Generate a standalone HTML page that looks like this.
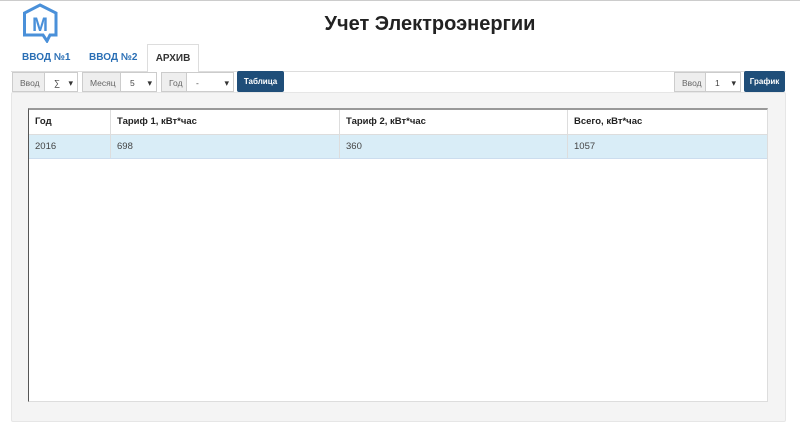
<!DOCTYPE html>
<html><head><meta charset="utf-8"><style>
body{margin:0;width:800px;height:426px;background:#fff;font-family:"Liberation Sans",Arial,sans-serif;position:relative;overflow:hidden;border-top:1px solid #ccc;box-sizing:border-box}
.a{position:absolute}
.title{left:0;width:860px;text-align:center;top:12px;font-size:20px;font-weight:bold;color:#222}
.tab{top:43px;height:27px;line-height:27px;font-size:10px;font-weight:bold;color:#2a6fb5}
.addon{background:#eee;border:1px solid #ccc;color:#666;font-size:8.5px;height:20px;line-height:20px;box-sizing:border-box;padding-left:7px}
.sel{background:#fff;border:1px solid #ccc;border-left:none;color:#444;font-size:8.5px;height:20px;line-height:20px;box-sizing:border-box;padding-left:9px}
.sel:after{content:"▾";position:absolute;right:4px;font-size:9px;color:#333}
.btn{background:#1f4e79;color:#fff;font-size:8px;font-weight:bold;height:21px;line-height:21px;text-align:center;border-radius:2px;top:70px}
.th,.td{font-size:9.5px;color:#222;padding-left:6px;box-sizing:border-box}
.th{font-weight:bold;top:108px;height:26px;line-height:26px}
.td{top:134px;height:24px;line-height:24px;color:#444}
</style></head><body>
<svg class="a" style="left:22px;top:2px" width="36" height="40" viewBox="0 0 36 40"><path d="M18 2 L34 10 L34 32 L28 32 L25 38 L21 32 L2.5 32 L2.5 10 Z" fill="none" stroke="#4a90d9" stroke-width="3" stroke-linejoin="miter"/><text x="18" y="28" text-anchor="middle" font-family="Liberation Sans" font-weight="bold" font-size="19" fill="#4a90d9">M</text></svg>
<div class="a title">Учет Электроэнергии</div>
<div class="a tab" style="left:22px">ВВОД №1</div>
<div class="a tab" style="left:89px">ВВОД №2</div>
<div class="a" style="left:147px;top:43px;width:52px;height:28px;border:1px solid #ddd;border-bottom:none;background:#fff;box-sizing:border-box;font-size:10px;font-weight:bold;color:#333;text-align:center;line-height:27px;z-index:2">АРХИВ</div>
<div class="a" style="left:11px;top:70px;width:775px;height:1px;background:#ddd"></div>
<div class="a" style="left:11px;top:91px;width:775px;height:330px;background:#f4f4f4;border:1px solid #e6e6e6;box-sizing:border-box;border-radius:2px"></div>
<div class="a addon" style="left:12px;top:71px;width:33px">Ввод</div><div class="a sel" style="left:45px;top:71px;width:33px">∑</div>
<div class="a addon" style="left:82px;top:71px;width:39px">Месяц</div><div class="a sel" style="left:121px;top:71px;width:36px">5</div>
<div class="a addon" style="left:161px;top:71px;width:26px">Год</div><div class="a sel" style="left:187px;top:71px;width:47px">-</div>
<div class="a btn" style="left:237px;width:47px">Таблица</div>
<div class="a addon" style="left:674px;top:71px;width:32px">Ввод</div><div class="a sel" style="left:706px;top:71px;width:35px">1</div>
<div class="a btn" style="left:744px;width:41px">График</div>
<div class="a" style="left:28px;top:107px;width:740px;height:294px;background:#fff;border-top:2px solid #999;border-left:1px solid #555;border-right:1px solid #ddd;border-bottom:1px solid #ddd;box-sizing:border-box"></div>
<div class="a" style="left:29px;top:133px;width:738px;height:1px;background:#ddd"></div>
<div class="a" style="left:29px;top:134px;width:738px;height:23px;background:#d9edf7;border-bottom:1px solid #cde"></div>
<div class="a" style="left:110px;top:109px;width:1px;height:48px;background:#ddd"></div>
<div class="a" style="left:339px;top:109px;width:1px;height:48px;background:#ddd"></div>
<div class="a" style="left:567px;top:109px;width:1px;height:48px;background:#ddd"></div>
<div class="a th" style="left:29px">Год</div><div class="a th" style="left:111px">Тариф 1, кВт*час</div><div class="a th" style="left:340px">Тариф 2, кВт*час</div><div class="a th" style="left:568px">Всего, кВт*час</div>
<div class="a td" style="left:29px">2016</div><div class="a td" style="left:111px">698</div><div class="a td" style="left:340px">360</div><div class="a td" style="left:568px">1057</div>
</body></html>
